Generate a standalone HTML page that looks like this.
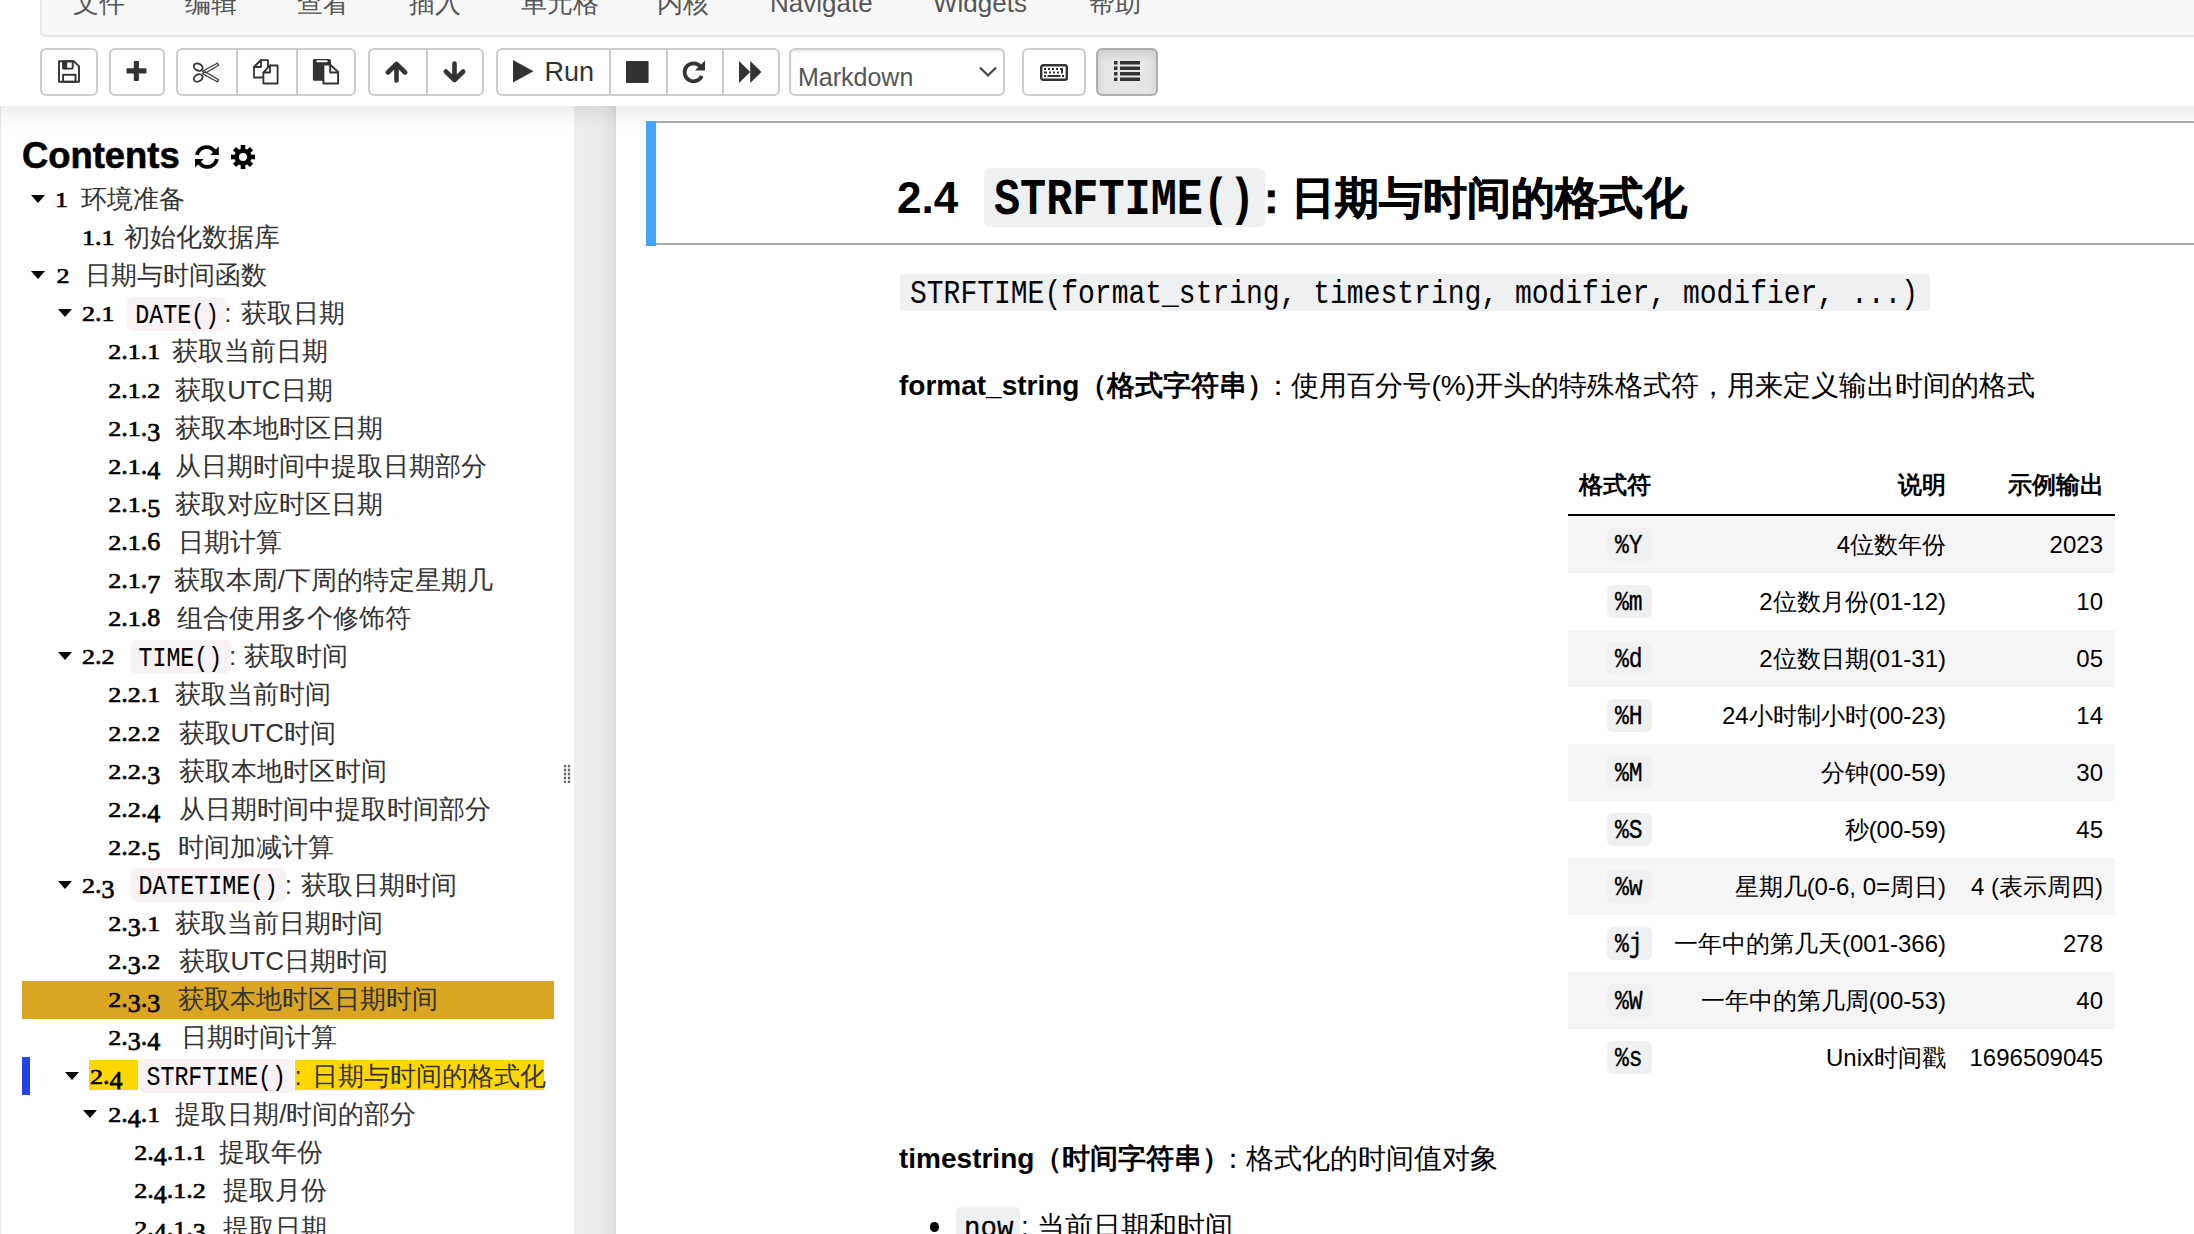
<!DOCTYPE html>
<html><head><meta charset="utf-8">
<style>
html,body{margin:0;padding:0;width:2194px;height:1234px;overflow:hidden;background:#fff;}
body{position:relative;font-family:"Liberation Sans",sans-serif;color:#000;}
.abs{position:absolute;}
#menubar{position:absolute;left:40px;top:-20px;width:2200px;height:53px;background:#f8f8f8;border:2px solid #e7e7e7;border-radius:5px;}
.mi{position:absolute;top:-12px;font-size:26px;line-height:30px;color:#555;white-space:nowrap;}
.btn{position:absolute;top:47.5px;height:48px;border:2px solid #ccc;border-radius:6px;background:#fff;box-sizing:border-box;}
.sep{position:absolute;top:0;width:2px;height:44px;background:#ccc;}
svg.ico{position:absolute;overflow:visible;}
#hdrshadow{position:absolute;left:0;top:106px;width:2194px;height:24px;background:linear-gradient(rgba(0,0,0,0.075),rgba(0,0,0,0.03) 45%,rgba(0,0,0,0));}
#side{position:absolute;left:0;top:106px;width:574px;height:1128px;background:#fff;border-left:1.5px solid #e8e8e8;box-sizing:border-box;}
#strip{position:absolute;left:574px;top:106px;width:42px;height:1128px;background:linear-gradient(90deg,#eeeeee 0%,#ebebeb 65%,#e2e2e2 92%,#dadada 100%);}
.row{position:absolute;left:0;width:574px;height:38px;line-height:38px;white-space:nowrap;font-size:26px;}
.row span{position:absolute;top:0;}
.num{font-family:"Liberation Serif",serif;color:#000;font-size:26px;-webkit-text-stroke:0.75px #000;}
.num i{font-style:normal;display:inline-block;line-height:38px;transform-origin:0 27.8px;}
.num i.dx{transform:scaleY(0.8);}
.num i.dd{transform:translateY(4.5px);}
.num i.dp{}
.tc{}
.txt{color:#333;}
.tri{position:absolute;width:0;height:0;border-left:7.5px solid transparent;border-right:7.5px solid transparent;border-top:8.5px solid #000;}
.tcb{background:#f9f2f4;border-radius:6px;height:34px;}
.tc{font-family:"Liberation Mono",monospace;font-size:23.25px;color:#000;transform:scaleY(1.17);transform-origin:0 23.2px;margin-top:3.2px;-webkit-text-stroke:0.1px #000;}
#nb{position:absolute;left:616px;top:106px;width:1578px;height:1128px;background:#fff;}
#nbshadow{display:none;}
#cell{position:absolute;left:646px;top:121px;width:1600px;height:124px;border-top:2px solid #ababab;border-bottom:2px solid #ababab;box-sizing:border-box;background:#fff;}
#cellbar{position:absolute;left:646px;top:121px;width:10px;height:124.5px;background:#42a5f5;}
.h{position:absolute;white-space:nowrap;font-weight:bold;}
.code{background:#eff0f1;border-radius:6px;position:absolute;}
.mono{font-family:"Liberation Mono",monospace;}
.p{position:absolute;white-space:nowrap;font-size:28px;line-height:40px;}
table.t{position:absolute;left:1568px;top:458px;border-collapse:collapse;font-size:24px;}
.trow{position:absolute;left:1568px;width:547px;height:57px;}
.tcell{position:absolute;white-space:nowrap;font-size:24px;line-height:57px;top:0;}
.pc{position:absolute;top:11.8px;left:39px;width:44.5px;height:33.6px;background:#eff0f1;border-radius:6px;}
.pt{position:absolute;font-family:"Liberation Mono",monospace;font-size:23px;-webkit-text-stroke:0.3px #000;line-height:57px;top:3.2px;transform:scaleY(1.21);transform-origin:0 33.4px;}
</style></head>
<body>
<div id="menubar"></div>
<div class="mi" style="left:73px">文件</div>
<div class="mi" style="left:185px">编辑</div>
<div class="mi" style="left:297px">查看</div>
<div class="mi" style="left:409px">插入</div>
<div class="mi" style="left:521px">单元格</div>
<div class="mi" style="left:657px">内核</div>
<div class="mi" style="left:770px">Navigate</div>
<div class="mi" style="left:933px">Widgets</div>
<div class="mi" style="left:1089px">帮助</div>

<!-- toolbar -->
<div class="btn" style="left:40px;width:57.5px"></div>
<div class="btn" style="left:109px;width:55.5px"></div>
<div class="btn" style="left:176px;width:180px"><div class="sep" style="left:58px"></div><div class="sep" style="left:118px"></div></div>
<div class="btn" style="left:368px;width:116px"><div class="sep" style="left:56px"></div></div>
<div class="btn" style="left:496px;width:284px"><div class="sep" style="left:111px"></div><div class="sep" style="left:168px"></div><div class="sep" style="left:224px"></div></div>
<div class="btn" style="left:788.5px;width:216px;box-shadow:inset 0 2px 2px rgba(0,0,0,0.075)"></div>
<div class="btn" style="left:1022px;width:63.5px"></div>
<div class="btn" style="left:1096.3px;width:61.3px;background:#e6e6e6;border-color:#adadad;box-shadow:inset 0 4px 8px rgba(0,0,0,0.125)"></div>

<!-- save icon -->
<svg class="ico" style="left:58px;top:60px" width="23" height="24" viewBox="0 0 23 24">
<path d="M1 1.3 H16 L21 6.3 V21.7 H1 Z" fill="none" stroke="#333" stroke-width="1.9" stroke-linejoin="round"/>
<rect x="5.1" y="1.3" width="9.6" height="7.3" rx="0.8" fill="none" stroke="#333" stroke-width="1.9"/>
<rect x="4.4" y="1.3" width="4.8" height="8" fill="#333"/>
<rect x="5.1" y="14.8" width="12.4" height="7" fill="none" stroke="#333" stroke-width="1.9"/>
</svg>
<!-- plus -->
<svg class="ico" style="left:126px;top:60px" width="21" height="21" viewBox="0 0 21 21">
<rect x="7.8" y="1" width="5.1" height="19.9" rx="0.8" fill="#333"/>
<rect x="0.5" y="8.2" width="20" height="5.3" rx="0.8" fill="#333"/>
</svg>
<!-- scissors -->
<svg class="ico" style="left:192px;top:62px" width="27" height="21" viewBox="0 0 27 21">
<ellipse cx="6.2" cy="5.1" rx="4.6" ry="3.4" fill="none" stroke="#333" stroke-width="1.9" transform="rotate(28 6.2 5.1)"/>
<ellipse cx="6.2" cy="16" rx="4.6" ry="3.4" fill="none" stroke="#333" stroke-width="1.9" transform="rotate(-28 6.2 16)"/>
<path d="M10.5 9.3 L25.3 1.2 L26.6 3.2 L13.2 11.2 Z" fill="#fff" stroke="#333" stroke-width="1.2" stroke-linejoin="round"/>
<path d="M10.5 11.7 L25.3 19.8 L26.6 17.8 L13.2 9.8 Z" fill="#fff" stroke="#333" stroke-width="1.2" stroke-linejoin="round"/>
<circle cx="13.4" cy="10.5" r="0.7" fill="#333"/>
</svg>
<!-- copy -->
<svg class="ico" style="left:253px;top:59px" width="26" height="26" viewBox="0 0 26 26">
<path d="M8 1.2 H15 V12 L10 18.5 H1 V8 Z" fill="#fff" stroke="#333" stroke-width="1.8" stroke-linejoin="round"/>
<path d="M1 8 L8 1.2 V8 Z" fill="#fff" stroke="#333" stroke-width="1.8" stroke-linejoin="round"/>
<path d="M17 6.5 H24.6 V24.5 H10.4 V13.5 Z" fill="#fff" stroke="#333" stroke-width="1.8" stroke-linejoin="round"/>
<path d="M10.4 13.5 L17 6.5 V13.5 Z" fill="#fff" stroke="#333" stroke-width="1.8" stroke-linejoin="round"/>
</svg>
<!-- paste -->
<svg class="ico" style="left:312px;top:59px" width="27" height="26" viewBox="0 0 27 26">
<rect x="0.9" y="0.1" width="18" height="21.7" rx="1.5" fill="#333"/>
<rect x="4.3" y="1.2" width="11.4" height="2.1" rx="1" fill="#fff"/>
<path d="M11.4 5.6 H18.2 L26.1 13 V24.5 H11.4 Z" fill="#fff" stroke="#333" stroke-width="1.9" stroke-linejoin="round"/>
<path d="M18.2 5.6 V13.5 H26" fill="none" stroke="#333" stroke-width="1.9" stroke-linejoin="round"/>
</svg>
<!-- arrow up -->
<svg class="ico" style="left:385px;top:61px" width="23" height="22" viewBox="0 0 23 22">
<path d="M11.5 19.5 V4 M2.8 11.5 L11.5 3 L20.2 11.5" fill="none" stroke="#333" stroke-width="4.6" stroke-linecap="round" stroke-linejoin="round"/>
</svg>
<!-- arrow down -->
<svg class="ico" style="left:443px;top:61px" width="23" height="22" viewBox="0 0 23 22">
<path d="M11.5 2.5 V18 M2.8 10.5 L11.5 19 L20.2 10.5" fill="none" stroke="#333" stroke-width="4.6" stroke-linecap="round" stroke-linejoin="round"/>
</svg>
<!-- play -->
<svg class="ico" style="left:513px;top:60px" width="21" height="23" viewBox="0 0 21 23">
<path d="M0 0 L20.5 11.3 L0 22.6 Z" fill="#333"/>
</svg>
<div class="abs" style="left:544.5px;top:52px;font-size:27px;line-height:40px;color:#333">Run</div>
<!-- stop -->
<svg class="ico" style="left:626px;top:61px" width="23" height="22" viewBox="0 0 23 22">
<rect x="0" y="0" width="22.6" height="22" rx="1" fill="#333"/>
</svg>
<!-- repeat -->
<svg class="ico" style="left:681px;top:60px" width="25" height="24" viewBox="0 0 25 24">
<path d="M19.5 6.5 A9 9 0 1 0 20.8 16" fill="none" stroke="#333" stroke-width="3.8"/>
<path d="M24 0.5 V10.5 H14 Z" fill="#333"/>
</svg>
<!-- forward -->
<svg class="ico" style="left:739px;top:61px" width="23" height="22" viewBox="0 0 23 22">
<path d="M0 0 L11.2 11 L0 22 Z M11.2 0 L22.5 11 L11.2 22 Z" fill="#333"/>
</svg>
<!-- select -->
<div class="abs" style="left:798px;top:56.5px;font-size:25px;line-height:40px;color:#555">Markdown</div>
<svg class="ico" style="left:979px;top:66px" width="18" height="12" viewBox="0 0 18 12">
<path d="M1 1.5 L9 9.5 L17 1.5" fill="none" stroke="#444" stroke-width="2.2"/>
</svg>
<!-- keyboard -->
<svg class="ico" style="left:1040px;top:64px" width="28" height="17" viewBox="0 0 28 17">
<rect x="1.2" y="1.2" width="25.6" height="14.6" rx="2" fill="none" stroke="#333" stroke-width="2.4"/>
<g fill="#333">
<rect x="4" y="4" width="2" height="2"/><rect x="8" y="4" width="2" height="2"/><rect x="12" y="4" width="2" height="2"/><rect x="16" y="4" width="2" height="2"/><rect x="20" y="4" width="2" height="2"/>
<rect x="4" y="7.5" width="3" height="2"/><rect x="9" y="7.5" width="2" height="2"/><rect x="13" y="7.5" width="2" height="2"/><rect x="17" y="7.5" width="2" height="2"/><rect x="21" y="4" width="2" height="5.5"/>
<rect x="4" y="11" width="2" height="2"/><rect x="7.5" y="11" width="13" height="2"/><rect x="22" y="11" width="2" height="2"/>
</g>
</svg>
<!-- list -->
<svg class="ico" style="left:1114px;top:61px" width="26" height="20" viewBox="0 0 26 20">
<g fill="#333">
<rect x="0" y="0" width="3.5" height="3.5"/><rect x="6" y="0" width="20" height="3.5"/>
<rect x="0" y="5.5" width="3.5" height="3.5"/><rect x="6" y="5.5" width="20" height="3.5"/>
<rect x="0" y="11" width="3.5" height="3.5"/><rect x="6" y="11" width="20" height="3.5"/>
<rect x="0" y="16.5" width="3.5" height="3.5"/><rect x="6" y="16.5" width="20" height="3.5"/>
</g>
</svg>

<!-- sidebar -->
<div id="side"></div>
<div id="strip"></div>
<div id="nb"></div>
<div id="nbshadow"></div>
<div id="hdrshadow"></div>

<div class="abs" style="left:22px;top:135.5px;font-size:36.4px;line-height:40px;font-weight:bold;white-space:nowrap;-webkit-text-stroke:0.6px #000">Contents</div>
<svg class="ico" style="left:195px;top:145px" width="24" height="24" viewBox="0 0 24 24">
<path d="M1.9 9.9 A9.8 9.8 0 0 1 20.3 7.6" fill="none" stroke="#000" stroke-width="3.9"/>
<path d="M23.8 1.4 V9.9 H15.3 Z" fill="#000"/>
<path d="M21.9 14.1 A9.8 9.8 0 0 1 3.5 16.4" fill="none" stroke="#000" stroke-width="3.9"/>
<path d="M0 22.6 V14.1 H8.6 Z" fill="#000"/>
</svg>
<svg class="ico" style="left:231px;top:145px" width="24" height="24" viewBox="0 0 24 24">
<g transform="translate(12 12)" fill="#000">
<circle r="8.6"/>
<rect x="-2.3" y="-12" width="4.6" height="24"/>
<rect x="-2.3" y="-12" width="4.6" height="24" transform="rotate(45)"/>
<rect x="-2.3" y="-12" width="4.6" height="24" transform="rotate(90)"/>
<rect x="-2.3" y="-12" width="4.6" height="24" transform="rotate(135)"/>
</g>
<circle cx="12" cy="12" r="4" fill="#fff"/>
</svg>

<div class="tri" style="left:31px;top:195.0px"></div><div class="row" style="top:180.00px"><span class="num abs" style="left:55px"><i class="dx">1</i></span><span class="txt abs" style="left:80.5px">环境准备</span></div>
<div class="row" style="top:218.11px"><span class="num abs" style="left:82px"><i class="dx">1</i><i class="dp">.</i><i class="dx">1</i></span><span class="txt abs" style="left:124.3px">初始化数据库</span></div>
<div class="tri" style="left:31px;top:271.2px"></div><div class="row" style="top:256.22px"><span class="num abs" style="left:56.5px"><i class="dx">2</i></span><span class="txt abs" style="left:84.8px">日期与时间函数</span></div>
<div class="tri" style="left:58px;top:309.3px"></div><div class="row" style="top:294.33px"><span class="num abs" style="left:82px"><i class="dx">2</i><i class="dp">.</i><i class="dx">1</i></span><span class="tcb abs" style="left:127.3px;top:2.5px;width:98.4px"></span><span class="tc abs" style="left:135.3px">DATE()</span><span class="txt abs" style="left:224.2px">:</span><span class="txt abs" style="left:240.8px">获取日期</span></div>
<div class="row" style="top:332.44px"><span class="num abs" style="left:108.2px"><i class="dx">2</i><i class="dp">.</i><i class="dx">1</i><i class="dp">.</i><i class="dx">1</i></span><span class="txt abs" style="left:171.8px">获取当前日期</span></div>
<div class="row" style="top:370.55px"><span class="num abs" style="left:108.2px"><i class="dx">2</i><i class="dp">.</i><i class="dx">1</i><i class="dp">.</i><i class="dx">2</i></span><span class="txt abs" style="left:175.2px">获取UTC日期</span></div>
<div class="row" style="top:408.66px"><span class="num abs" style="left:108.2px"><i class="dx">2</i><i class="dp">.</i><i class="dx">1</i><i class="dp">.</i><i class="dd">3</i></span><span class="txt abs" style="left:175.2px">获取本地时区日期</span></div>
<div class="row" style="top:446.77px"><span class="num abs" style="left:108.2px"><i class="dx">2</i><i class="dp">.</i><i class="dx">1</i><i class="dp">.</i><i class="dd">4</i></span><span class="txt abs" style="left:175.2px">从日期时间中提取日期部分</span></div>
<div class="row" style="top:484.88px"><span class="num abs" style="left:108.2px"><i class="dx">2</i><i class="dp">.</i><i class="dx">1</i><i class="dp">.</i><i class="dd">5</i></span><span class="txt abs" style="left:174.6px">获取对应时区日期</span></div>
<div class="row" style="top:522.99px"><span class="num abs" style="left:108.2px"><i class="dx">2</i><i class="dp">.</i><i class="dx">1</i><i class="dp">.</i><i class="du">6</i></span><span class="txt abs" style="left:178px">日期计算</span></div>
<div class="row" style="top:561.10px"><span class="num abs" style="left:108.2px"><i class="dx">2</i><i class="dp">.</i><i class="dx">1</i><i class="dp">.</i><i class="dd">7</i></span><span class="txt abs" style="left:173.8px">获取本周/下周的特定星期几</span></div>
<div class="row" style="top:599.21px"><span class="num abs" style="left:108.2px"><i class="dx">2</i><i class="dp">.</i><i class="dx">1</i><i class="dp">.</i><i class="du">8</i></span><span class="txt abs" style="left:176.6px">组合使用多个修饰符</span></div>
<div class="tri" style="left:58px;top:652.3px"></div><div class="row" style="top:637.32px"><span class="num abs" style="left:82px"><i class="dx">2</i><i class="dp">.</i><i class="dx">2</i></span><span class="tcb abs" style="left:130.5px;top:2.5px;width:100.0px"></span><span class="tc abs" style="left:138.5px">TIME()</span><span class="txt abs" style="left:229.0px">:</span><span class="txt abs" style="left:243.8px">获取时间</span></div>
<div class="row" style="top:675.43px"><span class="num abs" style="left:108.2px"><i class="dx">2</i><i class="dp">.</i><i class="dx">2</i><i class="dp">.</i><i class="dx">1</i></span><span class="txt abs" style="left:175.2px">获取当前时间</span></div>
<div class="row" style="top:713.54px"><span class="num abs" style="left:108.2px"><i class="dx">2</i><i class="dp">.</i><i class="dx">2</i><i class="dp">.</i><i class="dx">2</i></span><span class="txt abs" style="left:178.6px">获取UTC时间</span></div>
<div class="row" style="top:751.65px"><span class="num abs" style="left:108.2px"><i class="dx">2</i><i class="dp">.</i><i class="dx">2</i><i class="dp">.</i><i class="dd">3</i></span><span class="txt abs" style="left:178.6px">获取本地时区时间</span></div>
<div class="row" style="top:789.76px"><span class="num abs" style="left:108.2px"><i class="dx">2</i><i class="dp">.</i><i class="dx">2</i><i class="dp">.</i><i class="dd">4</i></span><span class="txt abs" style="left:178.6px">从日期时间中提取时间部分</span></div>
<div class="row" style="top:827.87px"><span class="num abs" style="left:108.2px"><i class="dx">2</i><i class="dp">.</i><i class="dx">2</i><i class="dp">.</i><i class="dd">5</i></span><span class="txt abs" style="left:178px">时间加减计算</span></div>
<div class="tri" style="left:58px;top:881.0px"></div><div class="row" style="top:865.98px"><span class="num abs" style="left:82px"><i class="dx">2</i><i class="dp">.</i><i class="dd">3</i></span><span class="tcb abs" style="left:130.5px;top:2.5px;width:155.8px"></span><span class="tc abs" style="left:138.5px">DATETIME()</span><span class="txt abs" style="left:284.8px">:</span><span class="txt abs" style="left:300.7px">获取日期时间</span></div>
<div class="row" style="top:904.09px"><span class="num abs" style="left:108.2px"><i class="dx">2</i><i class="dp">.</i><i class="dd">3</i><i class="dp">.</i><i class="dx">1</i></span><span class="txt abs" style="left:175.2px">获取当前日期时间</span></div>
<div class="row" style="top:942.20px"><span class="num abs" style="left:108.2px"><i class="dx">2</i><i class="dp">.</i><i class="dd">3</i><i class="dp">.</i><i class="dx">2</i></span><span class="txt abs" style="left:178.6px">获取UTC日期时间</span></div>
<div class="abs" style="left:22px;top:981.2px;width:532px;height:37.6px;background:#daa520"></div><div class="row" style="top:980.31px"><span class="num abs" style="left:108.2px"><i class="dx">2</i><i class="dp">.</i><i class="dd">3</i><i class="dp">.</i><i class="dd">3</i></span><span class="txt abs" style="left:178px">获取本地时区日期时间</span></div>
<div class="row" style="top:1018.42px"><span class="num abs" style="left:108.2px"><i class="dx">2</i><i class="dp">.</i><i class="dd">3</i><i class="dp">.</i><i class="dd">4</i></span><span class="txt abs" style="left:180.8px">日期时间计算</span></div>
<div class="abs" style="left:22px;top:1056.7px;width:8px;height:38px;background:#2442ea"></div><div class="tri" style="left:65px;top:1071.5px"></div><div class="abs" style="left:89px;top:1060.3px;width:49px;height:30.2px;background:#ffd700"></div><div class="abs" style="left:294.7px;top:1060.3px;width:249.3px;height:30.2px;background:#ffd700"></div><div class="row" style="top:1056.53px"><span class="num abs" style="left:89.9px"><i class="dx">2</i><i class="dp">.</i><i class="dd">4</i></span><span class="tcb abs" style="left:138.5px;top:2.5px;width:155.4px"></span><span class="tc abs" style="left:146.5px">STRFTIME()</span><span class="txt abs" style="left:294.4px">:</span><span class="txt abs" style="left:311.7px">日期与时间的格式化</span></div>
<div class="tri" style="left:83.4px;top:1109.6px"></div><div class="row" style="top:1094.64px"><span class="num abs" style="left:108.2px"><i class="dx">2</i><i class="dp">.</i><i class="dd">4</i><i class="dp">.</i><i class="dx">1</i></span><span class="txt abs" style="left:175.2px">提取日期/时间的部分</span></div>
<div class="row" style="top:1132.75px"><span class="num abs" style="left:134.2px"><i class="dx">2</i><i class="dp">.</i><i class="dd">4</i><i class="dp">.</i><i class="dx">1</i><i class="dp">.</i><i class="dx">1</i></span><span class="txt abs" style="left:219px">提取年份</span></div>
<div class="row" style="top:1170.86px"><span class="num abs" style="left:134.2px"><i class="dx">2</i><i class="dp">.</i><i class="dd">4</i><i class="dp">.</i><i class="dx">1</i><i class="dp">.</i><i class="dx">2</i></span><span class="txt abs" style="left:223.2px">提取月份</span></div>
<div class="row" style="top:1208.97px"><span class="num abs" style="left:134.2px"><i class="dx">2</i><i class="dp">.</i><i class="dd">4</i><i class="dp">.</i><i class="dx">1</i><i class="dp">.</i><i class="dd">3</i></span><span class="txt abs" style="left:223.2px">提取日期</span></div>

<!-- grip -->
<svg class="ico" style="left:563px;top:764px" width="8" height="21" viewBox="0 0 8 21">
<rect x="1.5" y="2" width="1" height="16" fill="#bbb"/><rect x="5.5" y="2" width="1" height="16" fill="#bbb"/><g fill="#666"><circle cx="2" cy="2" r="1.3"/><circle cx="6" cy="2" r="1.3"/><circle cx="2" cy="6" r="1.3"/><circle cx="6" cy="6" r="1.3"/><circle cx="2" cy="10" r="1.3"/><circle cx="6" cy="10" r="1.3"/><circle cx="2" cy="14" r="1.3"/><circle cx="6" cy="14" r="1.3"/><circle cx="2" cy="18" r="1.3"/><circle cx="6" cy="18" r="1.3"/></g>
</svg>

<!-- cell -->
<div id="cell"></div>
<div id="cellbar"></div>
<div class="h" style="left:897px;top:172.5px;font-size:44px;line-height:50px">2.4</div>
<div class="code" style="left:984px;top:168px;width:281px;height:58.5px"></div>
<div class="h mono" style="left:994px;top:172.5px;font-size:43.5px;line-height:50px;transform:scaleY(1.17);transform-origin:0 37px;top:177.5px">STRFTIME()</div>
<div class="h" style="left:1264px;top:172.5px;font-size:44px;line-height:50px;-webkit-text-stroke:0.6px #000">: 日期与时间的格式化</div>

<div class="code" style="left:899.5px;top:274.4px;width:1030px;height:36.3px;border-radius:4px"></div>
<div class="p mono" style="left:910px;top:276px;font-size:28px;transform:scaleY(1.16);transform-origin:0 30px">STRFTIME(format_string, timestring, modifier, modifier, ...)</div>

<div class="p" style="left:899px;top:366px"><b>format_string（格式字符串）</b><span style="margin-left:-11px;margin-right:-1px">：</span>使用百分号(%)开头的特殊格式符，用来定义输出时间的格式</div>

<div class="tcell" style="left:1579px;top:458px;line-height:54px;font-weight:bold">格式符</div>
<div class="tcell" style="right:248px;top:458px;line-height:54px;font-weight:bold">说明</div>
<div class="tcell" style="right:90px;top:458px;line-height:54px;font-weight:bold">示例输出</div>
<div class="abs" style="left:1568px;top:514px;width:547px;height:2px;background:#000"></div>
<div class="trow" style="top:516px;background:#f5f5f5"><div class="pc"></div><div class="pt" style="left:47px">%Y</div></div>
<div class="tcell" style="right:248px;top:516px">4位数年份</div>
<div class="tcell" style="right:91px;top:516px">2023</div>
<div class="trow" style="top:573px;background:#fff"><div class="pc"></div><div class="pt" style="left:47px">%m</div></div>
<div class="tcell" style="right:248px;top:573px">2位数月份(01-12)</div>
<div class="tcell" style="right:91px;top:573px">10</div>
<div class="trow" style="top:630px;background:#f5f5f5"><div class="pc"></div><div class="pt" style="left:47px">%d</div></div>
<div class="tcell" style="right:248px;top:630px">2位数日期(01-31)</div>
<div class="tcell" style="right:91px;top:630px">05</div>
<div class="trow" style="top:687px;background:#fff"><div class="pc"></div><div class="pt" style="left:47px">%H</div></div>
<div class="tcell" style="right:248px;top:687px">24小时制小时(00-23)</div>
<div class="tcell" style="right:91px;top:687px">14</div>
<div class="trow" style="top:744px;background:#f5f5f5"><div class="pc"></div><div class="pt" style="left:47px">%M</div></div>
<div class="tcell" style="right:248px;top:744px">分钟(00-59)</div>
<div class="tcell" style="right:91px;top:744px">30</div>
<div class="trow" style="top:801px;background:#fff"><div class="pc"></div><div class="pt" style="left:47px">%S</div></div>
<div class="tcell" style="right:248px;top:801px">秒(00-59)</div>
<div class="tcell" style="right:91px;top:801px">45</div>
<div class="trow" style="top:858px;background:#f5f5f5"><div class="pc"></div><div class="pt" style="left:47px">%w</div></div>
<div class="tcell" style="right:248px;top:858px">星期几(0-6, 0=周日)</div>
<div class="tcell" style="right:91px;top:858px">4 (表示周四)</div>
<div class="trow" style="top:915px;background:#fff"><div class="pc"></div><div class="pt" style="left:47px">%j</div></div>
<div class="tcell" style="right:248px;top:915px">一年中的第几天(001-366)</div>
<div class="tcell" style="right:91px;top:915px">278</div>
<div class="trow" style="top:972px;background:#f5f5f5"><div class="pc"></div><div class="pt" style="left:47px">%W</div></div>
<div class="tcell" style="right:248px;top:972px">一年中的第几周(00-53)</div>
<div class="tcell" style="right:91px;top:972px">40</div>
<div class="trow" style="top:1029px;background:#fff"><div class="pc"></div><div class="pt" style="left:47px">%s</div></div>
<div class="tcell" style="right:248px;top:1029px">Unix时间戳</div>
<div class="tcell" style="right:91px;top:1029px">1696509045</div>

<div class="p" style="left:899px;top:1139px"><b>timestring（时间字符串）</b><span style="margin-left:-11px;margin-right:-1px">：</span>格式化的时间值对象</div>
<div class="abs" style="left:929.5px;top:1222px;width:9.5px;height:9.5px;border-radius:50%;background:#000"></div>
<div class="code" style="left:955.7px;top:1206.5px;width:64.5px;height:40px"></div>
<div class="p mono" style="left:964px;top:1208.5px;font-size:27.5px;-webkit-text-stroke:0.3px #000">now</div>
<div class="p" style="left:1021px;top:1207px">: 当前日期和时间</div>
</body></html>
